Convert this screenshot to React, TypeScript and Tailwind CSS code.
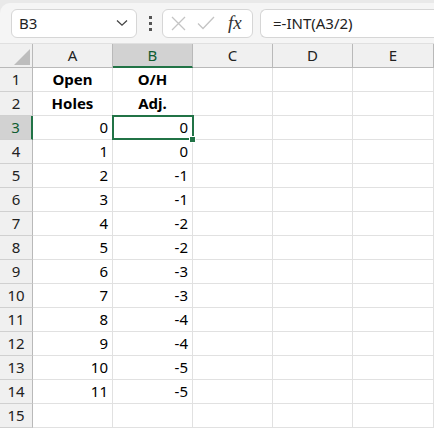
import React from "react";

const cols = ["A", "B", "C", "D", "E"];

// rows of data: [A, B, bold?]
const rows: { a: string; b: string; bold?: boolean }[] = [
  { a: "Open", b: "O/H", bold: true },
  { a: "Holes", b: "Adj.", bold: true },
  { a: "0", b: "0" },
  { a: "1", b: "0" },
  { a: "2", b: "-1" },
  { a: "3", b: "-1" },
  { a: "4", b: "-2" },
  { a: "5", b: "-2" },
  { a: "6", b: "-3" },
  { a: "7", b: "-3" },
  { a: "8", b: "-4" },
  { a: "9", b: "-4" },
  { a: "10", b: "-5" },
  { a: "11", b: "-5" },
  { a: "", b: "" },
];

function Toolbar() {
  return (
    <div className="bg-[#e9e9e9] pt-[3px]">
      <div className="flex h-[41px] items-center rounded-tl-[10px] bg-[#f5f5f5] border-b border-[#e0e0e0]">
        {/* name box */}
        <div className="ml-[11px] flex h-[29px] w-[126px] items-center justify-between rounded-md border border-[#d6d6d6] bg-white pl-[7px] pr-[8px]">
          <span className="text-[15px] text-[#222]">B3</span>
          <svg width="12" height="8" viewBox="0 0 12 8" fill="none">
            <path d="M1 1.5 L6 6.2 L11 1.5" stroke="#444" strokeWidth="1.3" />
          </svg>
        </div>
        {/* dots */}
        <div className="ml-[10px] flex w-[6px] flex-col items-center gap-[3px]">
          <span className="h-[3px] w-[3px] bg-[#555]" />
          <span className="h-[3px] w-[3px] bg-[#555]" />
          <span className="h-[3px] w-[3px] bg-[#555]" />
        </div>
        {/* function buttons */}
        <div className="ml-[9px] flex h-[29px] w-[91px] items-center rounded-md border border-[#d6d6d6] bg-white pl-[8px]">
          <svg width="15" height="15" viewBox="0 0 15 15" fill="none">
            <path d="M1 1 L14 14 M14 1 L1 14" stroke="#c4c4c4" strokeWidth="1.3" />
          </svg>
          <svg className="ml-[11px]" width="18" height="14" viewBox="0 0 18 14" fill="none">
            <path d="M1 7.5 L6 12.5 L17 1" stroke="#c4c4c4" strokeWidth="1.3" />
          </svg>
          <span
            className="ml-[13px] text-[19px] italic text-[#333]"
            style={{ fontFamily: '"Liberation Serif", serif' }}
          >
            fx
          </span>
        </div>
        {/* formula */}
        <div className="ml-[7px] flex h-[29px] flex-1 items-center rounded-l-md border border-r-0 border-[#d6d6d6] bg-white pl-[12px]">
          <span className="text-[15px] text-[#222]">=-INT(A3/2)</span>
        </div>
      </div>
    </div>
  );
}

export default function App() {
  return (
    <div
      className="h-[429px] w-[434px] overflow-hidden bg-white"
      style={{ fontFamily: '"Noto Sans", "Liberation Sans", sans-serif' }}
    >
      <Toolbar />
      <div className="grid grid-cols-[33px_80px_80px_80px_80px_81px]">
        {/* header row */}
        <div className="relative h-[24px] border-b border-r border-[#b9b9b9] bg-[#f0f0f0]">
          <svg className="absolute left-[14px] top-[5px]" width="16" height="16" viewBox="0 0 16 16">
            <path d="M16 0 L16 16 L0 16 Z" fill="#bdbdbd" />
          </svg>
        </div>
        {cols.map((c) => (
          <div
            key={c}
            className={
              c === "B"
                ? "flex h-[24px] items-center justify-center border-b-2 border-r border-b-[#217346] border-r-[#b9b9b9] bg-[#d2d2d2] text-[15px] text-[#0f5c30]"
                : "flex h-[24px] items-center justify-center border-b border-r border-[#b9b9b9] bg-[#f0f0f0] text-[15px] text-[#222]"
            }
          >
            {c}
          </div>
        ))}

        {rows.map((r, i) => {
          const n = i + 1;
          const sel = n === 3;
          const cell = "flex h-[24px] items-center border-b border-r border-[#e1e1e1] text-[15px] text-black";
          return (
            <React.Fragment key={n}>
              <div
                className={
                  sel
                    ? "flex h-[24px] items-center justify-center border-b border-r-2 border-b-[#d0d0d0] border-r-[#217346] bg-[#d2d2d2] text-[15px] text-[#0f5c30]"
                    : "flex h-[24px] items-center justify-center border-b border-r border-b-[#d0d0d0] border-r-[#b9b9b9] bg-[#f0f0f0] text-[15px] text-[#222]"
                }
              >
                {n}
              </div>
              <div className={`${cell} ${r.bold ? "justify-center font-bold" : "justify-end pr-[4px]"}`}>{r.a}</div>
              <div className={`${cell} relative ${r.bold ? "justify-center font-bold" : "justify-end pr-[4px]"}`}>
                {r.b}
                {sel && (
                  <>
                    <div className="absolute left-[-1px] top-[-1px] h-[25px] w-[82px] border-2 border-[#217346]" />
                    <div className="absolute bottom-[-4px] right-[-4px] z-10 h-[7px] w-[7px] border border-white bg-[#217346]" />
                  </>
                )}
              </div>
              <div className={cell} />
              <div className={cell} />
              <div className={cell} />
            </React.Fragment>
          );
        })}
      </div>
    </div>
  );
}
